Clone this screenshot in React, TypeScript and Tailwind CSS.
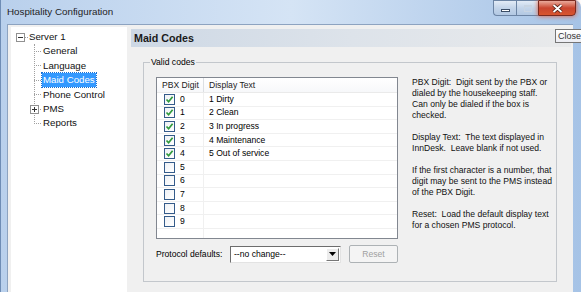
import React from 'react';

const codes = [
  { digit: 0, text: '1 Dirty', on: true },
  { digit: 1, text: '2 Clean', on: true },
  { digit: 2, text: '3 In progress', on: true },
  { digit: 3, text: '4 Maintenance', on: true },
  { digit: 4, text: '5 Out of service', on: true },
  { digit: 5, text: '', on: false },
  { digit: 6, text: '', on: false },
  { digit: 7, text: '', on: false },
  { digit: 8, text: '', on: false },
  { digit: 9, text: '', on: false },
];

const treeItems = ['General', 'Language', 'Maid Codes', 'Phone Control', 'PMS', 'Reports'];

function CheckBox({ on }: { on: boolean }) {
  return (
    <div className="w-[11px] h-[11px] border border-[#345b8a] bg-gradient-to-br from-[#eef1f5] to-white flex items-center justify-center">
      {on && (
        <svg width="9" height="9" viewBox="0 0 9 9">
          <path d="M1.5 4.5 L3.6 6.8 L7.6 1.8" fill="none" stroke="#2f9a3c" strokeWidth="1.7" />
        </svg>
      )}
    </div>
  );
}

function ExpandBox({ plus }: { plus?: boolean }) {
  return (
    <div className="w-[9px] h-[9px] border border-[#919191] bg-white flex items-center justify-center relative">
      <div className="w-[5px] h-px bg-[#333]" />
      {plus && <div className="absolute w-px h-[5px] bg-[#333]" />}
    </div>
  );
}

export default function App() {
  return (
    <div className="w-[581px] h-[292px] bg-white overflow-hidden relative font-['Liberation_Sans',Arial,sans-serif] text-black">
      <div className="w-full h-full flex flex-col rounded-tr-[7px] border-l border-[#6f8db5] bg-gradient-to-r from-[#b9d0ec] via-[#d5e4f5] to-[#a6c3e6]">
        {/* Title bar */}
        <div className="h-[24px] flex items-start shrink-0">
          <div className="pl-[6px] pt-[6px] text-[9.8px] leading-[12px] text-[#1e1e1e]">Hospitality Configuration</div>
          <div className="ml-auto mr-[5px] flex h-[16px]">
            <div className="w-[23px] h-full rounded-bl-[4px] border border-[#6c84a4] border-r-0 bg-gradient-to-b from-[#e2ebf6] via-[#c3d4e9] to-[#b2c8e3] flex items-center justify-center">
              <div className="w-[9px] h-[3px] bg-white border border-[#3b4d66] mt-[5px]" />
            </div>
            <div className="w-[22px] h-full border border-[#6c84a4] border-r-0 bg-gradient-to-b from-[#e2ebf6] via-[#c3d4e9] to-[#b2c8e3] flex items-center justify-center">
              <div className="w-[8px] h-[7px] border border-[#c8d4e2] border-t-2" />
            </div>
            <div className="w-[38px] h-full rounded-br-[4px] border border-[#7a2a20] bg-gradient-to-b from-[#e9a99b] via-[#c9452f] to-[#d8552f] flex items-center justify-center shadow-[0_0_5px_#e25a3a]">
              <svg width="11" height="9" viewBox="0 0 11 9">
                <path d="M1.5 1 L9.5 8 M9.5 1 L1.5 8" stroke="#4a1a10" strokeWidth="3.4" />
                <path d="M1.5 1 L9.5 8 M9.5 1 L1.5 8" stroke="#ffffff" strokeWidth="1.8" />
              </svg>
            </div>
          </div>
        </div>

        {/* Body */}
        <div className="flex-1 flex pl-[6px] pr-[8px]">
          <div className="flex-1 flex bg-[#f0f0f0] border-t border-l border-[#8da3c0] pt-[2px] pl-[3px] pr-[2px]">
            {/* Tree */}
            <div className="w-[116px] bg-white pt-[3px] text-[9.7px] leading-[14.4px] text-[#111]">
              <div className="h-[14.4px] flex items-center pl-[5px]">
                <ExpandBox />
                <div className="w-[3px] border-t border-dotted border-[#a0a0a0]" />
                <span className="ml-[1px]">Server 1</span>
              </div>
              <div className="relative">
                <div className="absolute left-[23px] top-0 bottom-[7px] border-l border-dotted border-[#a0a0a0]" />
                {treeItems.map(item => (
                  <div key={item} className="h-[14.4px] flex items-center pl-[23px] relative">
                    <div className="w-[7px] border-t border-dotted border-[#a0a0a0]" />
                    {item === 'PMS' && (
                      <div className="absolute left-[19px] top-[3px]">
                        <ExpandBox plus />
                      </div>
                    )}
                    <span
                      className={
                        item === 'Maid Codes'
                          ? 'ml-[1px] px-[1px] h-[14px] leading-[14px] bg-[#3399ff] text-white outline outline-1 outline-dotted outline-[#1a6fd0]'
                          : 'ml-[1px] px-[1px]'
                      }
                    >
                      {item}
                    </span>
                  </div>
                ))}
              </div>
            </div>

            {/* Right panel */}
            <div className="flex-1 ml-[4px] pt-[2px] flex flex-col">
              <div className="h-[18px] pl-[3px] flex items-center bg-gradient-to-r from-[#cdd8e5] via-[#dde3ea] to-[#e9eaeb] text-[10.7px] font-bold text-[#1a1a1a]">
                Maid Codes
              </div>

              {/* Group box */}
              <div className="mt-[15px] ml-[12px] mr-[14px] h-[220px] border border-[#c3c7cc] relative flex text-[8.6px]">
                <div className="absolute -top-[6px] left-[6px] px-[1px] bg-[#f0f0f0] leading-[11px]">Valid codes</div>

                <div className="pl-[12px] pt-[14px] flex flex-col">
                  <div className="w-[242px] h-[162px] border border-[#828790] bg-white flex flex-col">
                    <div className="h-[15px] flex border-b border-[#eaeaea] bg-gradient-to-b from-white to-[#f7f8fa] text-[#222]">
                      <div className="w-[47px] border-r border-[#dcdfe3] pl-[5px] flex items-center">PBX Digit</div>
                      <div className="flex-1 pl-[5px] flex items-center">Display Text</div>
                    </div>
                    {codes.map(c => (
                      <div key={c.digit} className="h-[13.6px] flex border-b border-[#f0f0f0] shrink-0">
                        <div className="w-[47px] border-r border-[#f0f0f0] pl-[7px] flex items-center">
                          <CheckBox on={c.on} />
                          <span className="ml-[5px]">{c.digit}</span>
                        </div>
                        <div className="flex-1 pl-[5px] flex items-center">{c.text}</div>
                      </div>
                    ))}
                    <div className="flex-1 flex">
                      <div className="w-[47px] border-r border-[#f0f0f0]" />
                    </div>
                  </div>

                  <div className="mt-[6px] flex items-center">
                    <div className="w-[74px]">Protocol defaults:</div>
                    <div className="w-[111px] h-[17px] border border-t-[#6d6d6d] border-l-[#6d6d6d] border-b-[#e3e3e3] border-r-[#e3e3e3] bg-white flex items-center">
                      <span className="pl-[3px] flex-1">--no change--</span>
                      <div className="w-[13px] h-[13px] mr-[1px] bg-[#ececec] border border-t-white border-l-white border-b-[#777] border-r-[#777] flex items-center justify-center">
                        <svg width="7" height="4" viewBox="0 0 7 4">
                          <path d="M0 0 H7 L3.5 4 Z" fill="#000" />
                        </svg>
                      </div>
                    </div>
                    <div className="ml-[8px] w-[49px] h-[18px] border border-[#adb2b5] rounded-[2px] bg-[#f4f4f4] flex items-center justify-center text-[#a0a0a0]">
                      Reset
                    </div>
                  </div>
                </div>

                <div className="ml-[14px] pt-[14px] leading-[11px] whitespace-pre text-[#111]">
                  <div>PBX Digit:  Digit sent by the PBX or</div>
                  <div>dialed by the housekeeping staff.</div>
                  <div>Can only be dialed if the box is</div>
                  <div>checked.</div>
                  <div className="mt-[11px]">Display Text:  The text displayed in</div>
                  <div>InnDesk.  Leave blank if not used.</div>
                  <div className="mt-[11px]">If the first character is a number, that</div>
                  <div>digit may be sent to the PMS instead</div>
                  <div>of the PBX Digit.</div>
                  <div className="mt-[11px]">Reset:  Load the default display text</div>
                  <div>for a chosen PMS protocol.</div>
                </div>
              </div>
            </div>
          </div>
        </div>
      </div>

      {/* Tooltip */}
      <div className="absolute left-[555px] top-[29px] h-[14px] pl-[2px] pr-[1px] border border-[#767676] border-r-0 bg-gradient-to-b from-white to-[#ecedf3] text-[9px] leading-[12px] text-[#333]">
        Close
      </div>
    </div>
  );
}
